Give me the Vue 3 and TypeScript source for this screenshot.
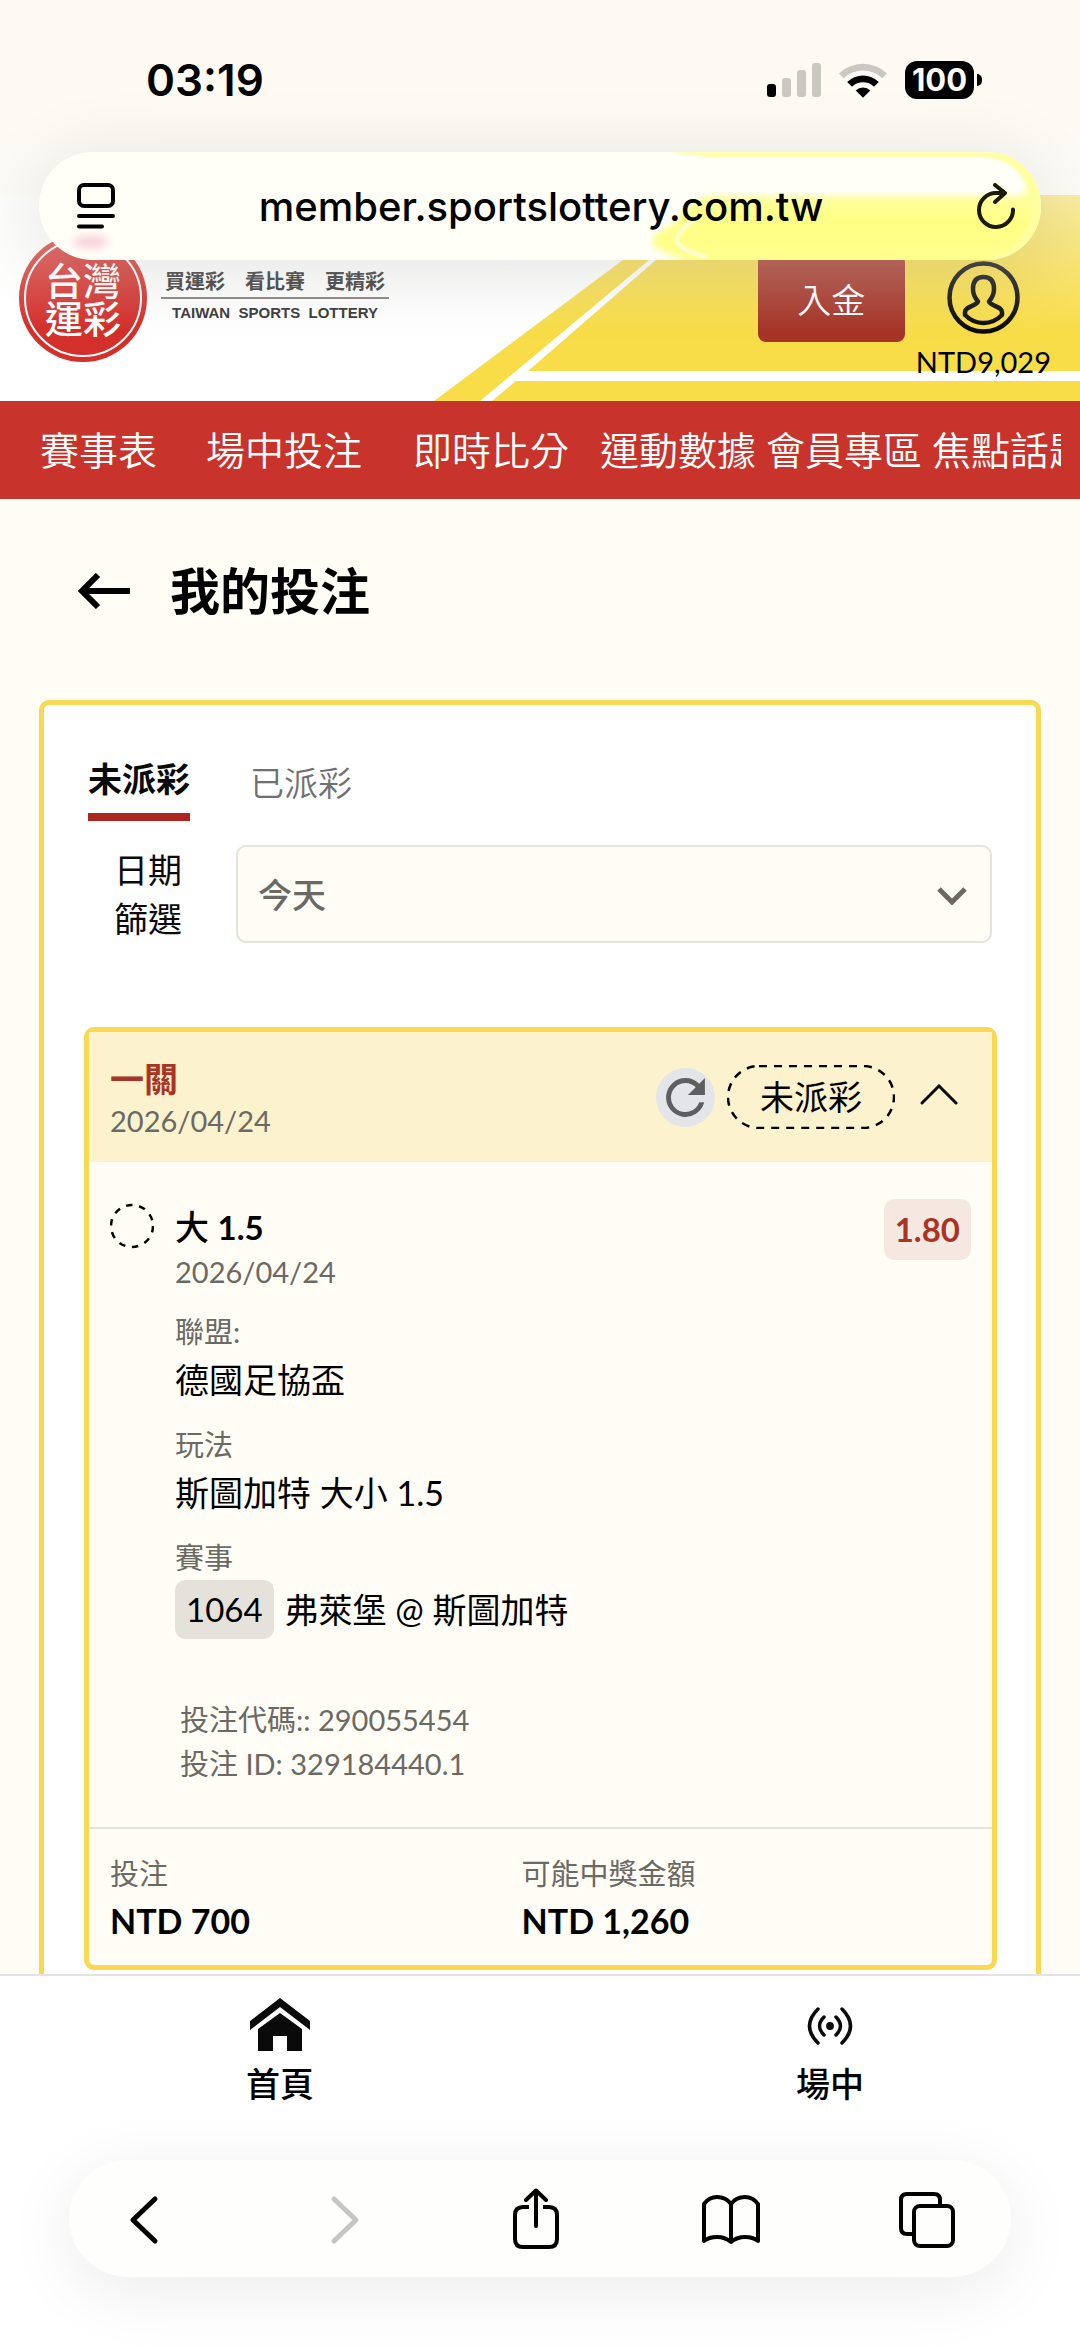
<script setup lang="ts">
import { ref } from 'vue'

interface NavItem { label: string; size: string }
interface Detail { label: string; value: string; code?: string }

const navItems: NavItem[] = [
  { label: '賽事表', size: 'w-a' },
  { label: '場中投注', size: 'w-b' },
  { label: '即時比分', size: 'w-c' },
  { label: '運動數據', size: 'w-a' },
  { label: '會員專區', size: 'w-a' },
  { label: '焦點話題', size: 'w-a' },
]

const details: Detail[] = [
  { label: '聯盟:', value: '德國足協盃' },
  { label: '玩法', value: '斯圖加特 大小 1.5' },
  { label: '賽事', value: '弗萊堡 @ 斯圖加特', code: '1064' },
]

const period = ref('today')
const tab = ref<'open' | 'settled'>('open')
const expanded = ref(true)
</script>

<template>
  <div class="page">
    <div class="status">
      <span class="clock">03:19</span>
      <div class="status-icons">
        <svg width="54" height="34" viewBox="0 0 54 34">
          <rect x="0" y="21" width="9" height="13" rx="3" fill="#000" />
          <rect x="15" y="15" width="9" height="19" rx="3" fill="#c9c8c2" />
          <rect x="30" y="7" width="9" height="27" rx="3" fill="#c9c8c2" />
          <rect x="45" y="0" width="9" height="34" rx="3" fill="#c9c8c2" />
        </svg>
        <svg width="48" height="35" viewBox="0 0 48 35">
          <path d="M0 10.500A34.500 34.500 0 0 1 48 10.500L43.300 15.200A28 28 0 0 0 4.700 15.200Z" fill="#c9c8c2" />
          <path d="M8.200 19A22.600 22.600 0 0 1 39.800 19L35 23.700A16 16 0 0 0 13 23.700Z" fill="#000" />
          <path d="M16.700 27.500A10.500 10.500 0 0 1 31.300 27.500L24 34.800Z" fill="#000" />
        </svg>
        <div class="battery"><span>100</span></div>
      </div>
    </div>

    <div class="address">
      <svg class="glow" width="400" height="108" viewBox="0 0 400 108">
        <defs>
          <filter id="soft" x="-10%" y="-20%" width="120%" height="140%"><feGaussianBlur stdDeviation="3" /></filter>
          <filter id="fine" x="-10%" y="-20%" width="120%" height="140%"><feGaussianBlur stdDeviation="1" /></filter>
          <linearGradient id="lemon" x1="0" y1="0" x2="0" y2="1">
            <stop offset="0" stop-color="#ffffb4" />
            <stop offset="0.5" stop-color="#ffff85" />
            <stop offset="1" stop-color="#ffff90" />
          </linearGradient>
        </defs>
        <path d="M66 44H375Q388 44 388 24L400 20V120H80Q40 110 12 94Q6 84 34 72Q46 50 66 44Z" fill="url(#lemon)" filter="url(#soft)" />
        <path d="M26 0Q60 5 80 5H340Q384 6 391 54Q388 98 340 108H400V0Z" fill="#ffffa2" filter="url(#fine)" />
        <path d="M60 64Q36 78 36 88Q38 98 66 105" fill="none" stroke="#ffffd8" stroke-width="4" filter="url(#fine)" />
      </svg>
      <i class="blush"></i>
      <button class="plain" type="button" aria-label="頁面選單">
        <svg width="38" height="46" viewBox="0 0 38 46" fill="none" stroke="#000" stroke-width="4" stroke-linecap="round">
          <rect x="2" y="2" width="34" height="21" rx="5" />
          <path d="M2 33H36M2 43.500H25" />
        </svg>
      </button>
      <span class="url">member.sportslottery.com.tw</span>
      <button class="plain" type="button" aria-label="重新載入">
        <svg width="38" height="46" viewBox="0 0 38 46" fill="none" stroke="#1c1a04" stroke-width="4" stroke-linecap="round" stroke-linejoin="round">
          <path d="M36 26.500A17 17 0 1 1 19 10H27M18 2L28 10L18 19" />
        </svg>
      </button>
    </div>

    <header class="banner">
      <svg class="pitch" width="646" height="206" viewBox="0 0 646 206" preserveAspectRatio="xMaxYMax slice">
        <path d="M0 206L276 0H646V206Z" fill="#f8dd49" />
        <path d="M46 206L215 65L293 0H301L222 65L94 176H646V186H82L58 206Z" fill="#fff" />
      </svg>
      <div class="logo">台灣<br />運彩</div>
      <div class="slogan">
        <span class="zh">買運彩　看比賽　更精彩</span>
        <span class="en">TAIWAN&nbsp; SPORTS&nbsp; LOTTERY</span>
      </div>
      <button class="deposit" type="button">入金</button>
      <a class="account" href="#account">
        <svg width="73" height="73" viewBox="0 0 73 73" fill="none" stroke="#0b0b0b" stroke-width="4.500" stroke-linejoin="round">
          <circle cx="36.500" cy="36.500" r="34" />
          <path d="M36.500 16C28 16 26 22 26 28C26 34 28 37 31 40.500C30 45 18 45 18 51V54C24 60 30 62 36.500 62C43 62 49 60 55 54V51C55 45 43 45 42 40.500C45 37 47 34 47 28C47 22 45 16 36.500 16Z" />
        </svg>
        <span>NTD9,029</span>
      </a>
    </header>

    <nav class="menu">
      <div class="menu-track">
        <a v-for="item in navItems" :key="item.label" :class="item.size" href="#menu">{{ item.label }}</a>
      </div>
    </nav>

    <main>
      <div class="title">
        <button class="plain" type="button" aria-label="返回">
          <svg width="52" height="36" viewBox="0 0 52 36" fill="none" stroke="#000" stroke-width="6">
            <path d="M52 18H5M20 2L4 18L20 34" />
          </svg>
        </button>
        <h1>我的投注</h1>
      </div>

      <section class="panel">
        <div class="tabs">
          <button type="button" :class="{ active: tab === 'open' }" @click="tab = 'open'">未派彩</button>
          <button type="button" :class="{ active: tab === 'settled' }" @click="tab = 'settled'">已派彩</button>
        </div>

        <div class="filter">
          <label for="period">日期<br />篩選</label>
          <div class="picker">
            <select id="period" v-model="period">
              <option value="today">今天</option>
            </select>
            <svg width="30" height="18" viewBox="0 0 30 18" fill="none" stroke="#6b6963" stroke-width="5">
              <path d="M2 2L15 15L28 2" />
            </svg>
          </div>
        </div>

        <article class="bet">
          <div class="bet-head">
            <div class="bet-name">
              <h2>一關</h2>
              <time>2026/04/24</time>
            </div>
            <button class="refresh" type="button" aria-label="更新">
              <svg width="59" height="59" viewBox="-6 -6 36 36">
                <path d="M17.650 6.350A7.960 7.960 0 0 0 12 4a8 8 0 1 0 7.730 10h-2.080A6 6 0 1 1 12 6c1.660 0 3.140.690 4.220 1.780L13 11h7V4z" transform="translate(12 12) scale(1.480) translate(-12 -12)" fill="#5e5f61" />
              </svg>
            </button>
            <span class="state">
              <svg width="168" height="64" viewBox="0 0 168 64">
                <rect x="1" y="1" width="166" height="62" rx="31" fill="none" stroke="#000" stroke-width="2.500" stroke-dasharray="8 7" />
              </svg>
              未派彩
            </span>
            <button class="plain" type="button" aria-label="收合" @click="expanded = !expanded">
              <svg width="38" height="26" viewBox="0 0 38 26" fill="none" stroke="#0a0a0a" stroke-width="3" stroke-linecap="round">
                <path d="M2 19L19 2L36 19" />
              </svg>
            </button>
          </div>

          <div v-if="expanded" class="bet-body">
            <svg class="pending" width="44" height="46" viewBox="0 0 44 46">
              <circle cx="22" cy="23" r="21" fill="none" stroke="#000" stroke-width="2.500" stroke-dasharray="6.500 6.694" />
            </svg>
            <div class="info">
              <h3>大 <b>1.5</b></h3>
              <time>2026/04/24</time>
              <div v-for="d in details" :key="d.label" class="detail">
                <p class="key">{{ d.label }}</p>
                <p class="value" :class="{ coded: d.code }"><span v-if="d.code" class="code">{{ d.code }}</span>{{ d.value }}</p>
              </div>
              <div class="refs">
                <p>投注代碼:: 290055454</p>
                <p>投注 ID: 329184440.1</p>
              </div>
            </div>
            <span class="odds">1.80</span>
          </div>

          <dl class="totals">
            <div><dt>投注</dt><dd>NTD 700</dd></div>
            <div><dt>可能中獎金額</dt><dd>NTD 1,260</dd></div>
          </dl>
        </article>
      </section>
    </main>

    <footer class="dock">
      <nav class="shortcuts">
        <a href="#home">
          <svg width="60" height="54" viewBox="0 0 60 54" fill="#0a0a0a">
            <path d="M30 0L60 23V32L30 9L0 32V23Z" />
            <path d="M30 15L52 31V53H37V38H23V53H8V31Z" />
          </svg>
          <span>首頁</span>
        </a>
        <a href="#live">
          <svg width="60" height="54" viewBox="0 0 60 54" fill="none" stroke="#0a0a0a" stroke-width="3.500" stroke-linecap="round">
            <circle cx="30" cy="28" r="3.900" fill="#0a0a0a" stroke="none" />
            <path d="M24 19Q15 28 24 37M36 19Q45 28 36 37M18 11Q1 28 18 45M42 11Q59 28 42 45" />
          </svg>
          <span>場中</span>
        </a>
      </nav>

      <div class="toolbar">
        <button class="plain" type="button" aria-label="上一頁">
          <svg width="60" height="62" viewBox="0 0 60 62" fill="none" stroke="#000" stroke-width="5" stroke-linecap="round" stroke-linejoin="round"><path d="M41 11L19 32L41 53" /></svg>
        </button>
        <button class="plain" type="button" aria-label="下一頁" disabled>
          <svg width="60" height="62" viewBox="0 0 60 62" fill="none" stroke="#c5c5c5" stroke-width="5" stroke-linecap="round" stroke-linejoin="round"><path d="M24 11L46 32L24 53" /></svg>
        </button>
        <button class="plain" type="button" aria-label="分享">
          <svg width="60" height="62" viewBox="0 0 60 62" fill="none" stroke="#000" stroke-width="4" stroke-linecap="round" stroke-linejoin="round">
            <path d="M30 38V3M20 12L30 2.500L40 12" />
            <path d="M23 19H17Q9 19 9 27V51Q9 59 17 59H43Q51 59 51 51V27Q51 19 43 19H37" stroke-linecap="butt" />
          </svg>
        </button>
        <button class="plain" type="button" aria-label="書籤">
          <svg width="60" height="62" viewBox="0 0 60 62" fill="none" stroke="#000" stroke-width="4" stroke-linejoin="round">
            <path d="M30 16V54Q24 49 16 49Q8 49 3 53V16Q8 9 16 9Q25 9 30 16Q35 9 44 9Q52 9 57 16V53Q52 49 44 49Q36 49 30 54" />
          </svg>
        </button>
        <button class="plain" type="button" aria-label="分頁">
          <svg width="60" height="62" viewBox="0 0 60 62" fill="none" stroke="#000" stroke-width="4">
            <rect x="17" y="18" width="39" height="40" rx="6" />
            <path d="M17 46H10Q4 46 4 40V12Q4 6 10 6H37Q43 6 43 12V18" />
          </svg>
        </button>
      </div>
    </footer>
  </div>
</template>

<style>
body {
  margin: 0;
  background: #fffdf6;
}
</style>

<style scoped>
* {
  box-sizing: border-box;
}
h1, h2, h3, p, dl, dd {
  margin: 0;
}
button, select {
  font-family: inherit;
  margin: 0;
}
a {
  color: inherit;
  text-decoration: none;
}
svg {
  display: block;
  flex: none;
}
.page {
  display: flex;
  flex-direction: column;
  min-height: 100vh;
  overflow: hidden;
  background: linear-gradient(#fefaf3, #fefaf3 60px, #fcfbf6 196px, #fffdf6 197px);
  color: #000;
  font-family: Lato, "Noto Sans CJK TC", sans-serif;
  font-size: 34px;
}
.plain {
  flex: none;
  padding: 0;
  border: 0;
  background: none;
}

.status {
  display: flex;
  justify-content: space-between;
  align-items: center;
  height: 152px;
  padding: 8px 98px 0 146px;
  font-family: Inter, sans-serif;
}
.clock {
  font-size: 44px;
  font-weight: 600;
}
.status-icons {
  display: flex;
  align-items: center;
  gap: 18px;
}
.battery {
  position: relative;
  width: 69px;
  height: 38px;
  margin-right: 8px;
  border-radius: 12px;
  background: #000;
  color: #fcfaf3;
  font-size: 31px;
  font-weight: 700;
  line-height: 38px;
  text-align: center;
}
.battery::after {
  content: "";
  position: absolute;
  right: -8px;
  top: 13px;
  width: 5px;
  height: 12px;
  border-radius: 0 6px 6px 0;
  background: #000;
}

.address {
  position: relative;
  z-index: 2;
  display: flex;
  align-items: center;
  height: 108px;
  margin: 0 39px -65px;
  padding: 0 26px 0 38px;
  border-radius: 54px;
  background: #fffff8;
  box-shadow: 0 10px 80px rgba(0, 0, 0, 0.11);
  font-family: Inter, sans-serif;
}
.address > .plain, .url {
  position: relative;
}
.glow {
  position: absolute;
  right: 0;
  top: 0;
  border-radius: 0 54px 54px 0;
}
.blush {
  position: absolute;
  left: 34px;
  bottom: 12px;
  width: 36px;
  height: 12px;
  border-radius: 50%;
  background: #f8ccd6;
  filter: blur(5px);
}
.url {
  flex: 1;
  padding-right: 10px;
  font-size: 40px;
  font-weight: 500;
  text-align: center;
}

.banner {
  position: relative;
  z-index: 1;
  display: flex;
  align-items: center;
  height: 206px;
  padding: 0 29px 0 19px;
  background: #fff;
}
.banner::after {
  content: "";
  position: absolute;
  inset: 0 0 70px;
  background: linear-gradient(rgba(250, 250, 247, 0.5), rgba(250, 250, 247, 0));
  pointer-events: none;
}
.pitch {
  position: absolute;
  right: 0;
  top: 0;
}
.logo {
  position: relative;
  width: 128px;
  height: 128px;
  padding-top: 26px;
  border-radius: 50%;
  background: #d32f2b;
  color: #fff;
  font-family: "Noto Sans CJK TC", sans-serif;
  font-size: 38px;
  font-weight: 500;
  line-height: 38px;
  text-align: center;
}
.logo::before {
  content: "";
  position: absolute;
  inset: 5px;
  border: 2px solid #fff;
  border-radius: 50%;
}
.slogan {
  display: flex;
  flex-direction: column;
  margin-left: 14px;
  text-align: center;
  color: #333;
}
.zh {
  padding: 0 4px 4px;
  border-bottom: 2px solid #85827c;
  font-size: 20px;
  font-weight: 700;
  line-height: 24px;
}
.en {
  font-family: "Liberation Sans", sans-serif;
  font-size: 15px;
  font-weight: 700;
  line-height: 28px;
}
.deposit {
  position: relative;
  width: 147px;
  height: 88px;
  margin-left: auto;
  padding: 0;
  border: 0;
  border-radius: 8px;
  background: #a63528;
  color: #fff;
  font-size: 34px;
  font-weight: 350;
}
.account {
  position: relative;
  display: flex;
  flex-direction: column;
  align-items: center;
  align-self: flex-start;
  gap: 10px;
  margin-left: 11px;
  padding-top: 66px;
  font-size: 29px;
  line-height: 36px;
}

.menu {
  padding: 0 19px 0 40px;
  background: #c8342b;
}
.menu-track {
  display: flex;
  overflow: hidden;
  color: #fff;
  font-size: 39px;
  font-weight: 350;
  line-height: 98px;
  white-space: nowrap;
}
.menu-track a {
  flex: none;
}
.w-a {
  width: 166px;
}
.w-b {
  width: 207px;
}
.w-c {
  width: 187px;
}

.title {
  display: flex;
  align-items: center;
  gap: 40px;
  padding: 54px 78px 71px;
}
h1 {
  font-size: 50px;
  line-height: 76px;
}
.panel {
  margin: 0 39px;
  padding: 49px 39px 4px 40px;
  border: 5px solid #f9d852;
  border-bottom: 0;
  border-radius: 10px 10px 0 0;
  background: #fff;
}
.tabs {
  display: flex;
  align-items: center;
  gap: 60px;
  padding-left: 4px;
}
.tabs button {
  padding: 0 0 9px;
  border: 0;
  background: none;
  color: #707070;
  font-size: 34px;
  font-weight: 350;
  line-height: 50px;
}
.tabs .active {
  border-bottom: 8px solid #ad2620;
  color: #0a0a0a;
  font-weight: 700;
}
.filter {
  display: flex;
  gap: 54px;
  margin: 24px 5px 84px 0;
}
.filter label {
  flex: none;
  width: 98px;
  color: #0a0a0a;
  line-height: 49px;
  text-align: right;
}
.picker {
  position: relative;
  flex: 1;
}
.picker select {
  width: 100%;
  height: 98px;
  padding: 0 20px;
  border: 2px solid #e6e2dc;
  border-radius: 10px;
  background: #fffdf6;
  color: #6b6963;
  font-size: 34px;
  font-weight: 500;
  appearance: none;
}
.picker svg {
  position: absolute;
  right: 25px;
  top: 42px;
  pointer-events: none;
}

.bet {
  border: 5px solid #f9d852;
  border-radius: 10px;
  background: #fffdf6;
}
.bet-head {
  display: flex;
  align-items: center;
  height: 130px;
  padding: 0 34px 0 21px;
  background: #fcf2ce;
}
.bet-name {
  flex: 1;
  padding-top: 6px;
}
h2 {
  color: #a93425;
  font-size: 34px;
  line-height: 42px;
}
time {
  display: block;
  color: #6b6963;
  font-size: 29px;
  line-height: 42px;
}
.refresh {
  padding: 0;
  border: 0;
  border-radius: 50%;
  background: #e3e5e8;
}
.state {
  position: relative;
  width: 168px;
  margin: 0 25px 0 12px;
  line-height: 64px;
  text-align: center;
}
.state svg {
  position: absolute;
  left: 0;
  top: 0;
}
.bet-body {
  display: flex;
  align-items: flex-start;
  padding: 37px 21px 41px;
}
.pending {
  margin-top: 4px;
}
.info {
  flex: 1;
  padding: 4px 0 0 21px;
}
h3 {
  font-size: 34px;
  font-weight: 500;
  line-height: 48px;
}
h3 b {
  font-size: 33px;
}
.detail {
  margin-top: 17px;
}
.key, .refs, dt {
  color: #6b6963;
  font-size: 29px;
  line-height: 44px;
}
.value {
  line-height: 52px;
}
.coded {
  display: flex;
  gap: 11px;
  line-height: 59px;
}
.code {
  padding: 0 11px;
  border-radius: 10px;
  background: #e5e2dc;
  font-size: 33px;
}
.refs {
  margin: 59px 0 0 5px;
}
.odds {
  padding: 0 11px;
  border-radius: 10px;
  background: #f5e8e0;
  color: #a93425;
  font-size: 33px;
  font-weight: 700;
  line-height: 61px;
}
.totals {
  display: grid;
  grid-template-columns: 7fr 8fr;
  padding: 23px 0 19px 21px;
  border-top: 2px solid #e6e2dc;
}
dd {
  font-weight: 700;
  line-height: 50px;
}

.dock {
  flex: 1;
  padding-bottom: 69px;
  border-top: 2px solid #e3e3e3;
  background: #fff;
}
.shortcuts {
  display: grid;
  grid-template-columns: 56fr 50fr;
  gap: 20px;
  padding: 22px 0 54px;
}
.shortcuts a {
  display: flex;
  flex-direction: column;
  align-items: center;
  gap: 10px;
  font-weight: 500;
  line-height: 44px;
}
.toolbar {
  display: flex;
  justify-content: space-between;
  align-items: center;
  height: 117px;
  margin: 0 69px;
  padding: 0 54px 0 45px;
  border-radius: 59px;
  background: #fefefd;
  box-shadow: 0 14px 70px rgba(0, 0, 0, 0.08);
}
</style>
